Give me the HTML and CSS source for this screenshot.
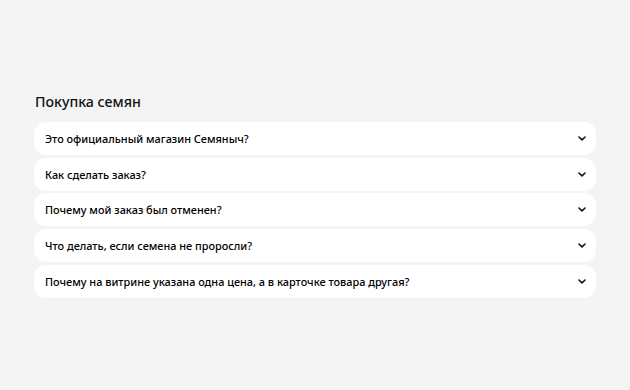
FILE: index.html
```html
<!DOCTYPE html>
<html lang="ru">
	<head>
		<meta charset="UTF-8">
		<meta name="viewport" content="width=device-width, initial-scale=1.0">
		<title>Покупка семян</title>
		<link rel="stylesheet" href="styles.css">
	</head>
	<body>
		<section class="faq">
			<h2 class="faq-title">Покупка семян</h2>
			<div class="faq-list">
				<div class="faq-item">
					<span class="faq-question">Это официальный магазин Семяныч?</span>
					<svg class="faq-arrow" viewBox="0 0 8 5" width="8" height="5"><path d="M1 1l3 2.8L7 1" /></svg>
				</div>
				<div class="faq-item">
					<span class="faq-question">Как сделать заказ?</span>
					<svg class="faq-arrow" viewBox="0 0 8 5" width="8" height="5"><path d="M1 1l3 2.8L7 1" /></svg>
				</div>
				<div class="faq-item">
					<span class="faq-question">Почему мой заказ был отменен?</span>
					<svg class="faq-arrow" viewBox="0 0 8 5" width="8" height="5"><path d="M1 1l3 2.8L7 1" /></svg>
				</div>
				<div class="faq-item">
					<span class="faq-question">Что делать, если семена не проросли?</span>
					<svg class="faq-arrow" viewBox="0 0 8 5" width="8" height="5"><path d="M1 1l3 2.8L7 1" /></svg>
				</div>
				<div class="faq-item">
					<span class="faq-question">Почему на витрине указана одна цена, а в карточке товара другая?</span>
					<svg class="faq-arrow" viewBox="0 0 8 5" width="8" height="5"><path d="M1 1l3 2.8L7 1" /></svg>
				</div>
			</div>
		</section>
	</body>
</html>
```

FILE: styles.css
```css
body
{
	font-family: "Noto Sans", sans-serif;
	background-color: #f4f4f4;
	color: #111;
	margin: 0;
	padding: 91px 34px 0 34px;
}
.faq-title
{
	font-size: 14.2px;
	font-weight: 500;
	margin: 0 0 9px 1px;
	line-height: 22px;
	color: #111;
}
.faq-list
{
	display: flex;
	flex-direction: column;
	gap: 2.7px;
}
.faq-item
{
	display: flex;
	align-items: center;
	justify-content: space-between;
	background-color: #fff;
	border-radius: 12px;
	height: 33px;
	padding: 0 10px 0 11px;
	box-sizing: border-box;
}
.faq-question
{
	font-size: 10.9px;
	font-weight: 500;
	color: #000;
}
.faq-arrow
{
	fill: none;
	stroke: #111;
	stroke-width: 1.6;
	stroke-linecap: round;
	stroke-linejoin: round;
}
```
